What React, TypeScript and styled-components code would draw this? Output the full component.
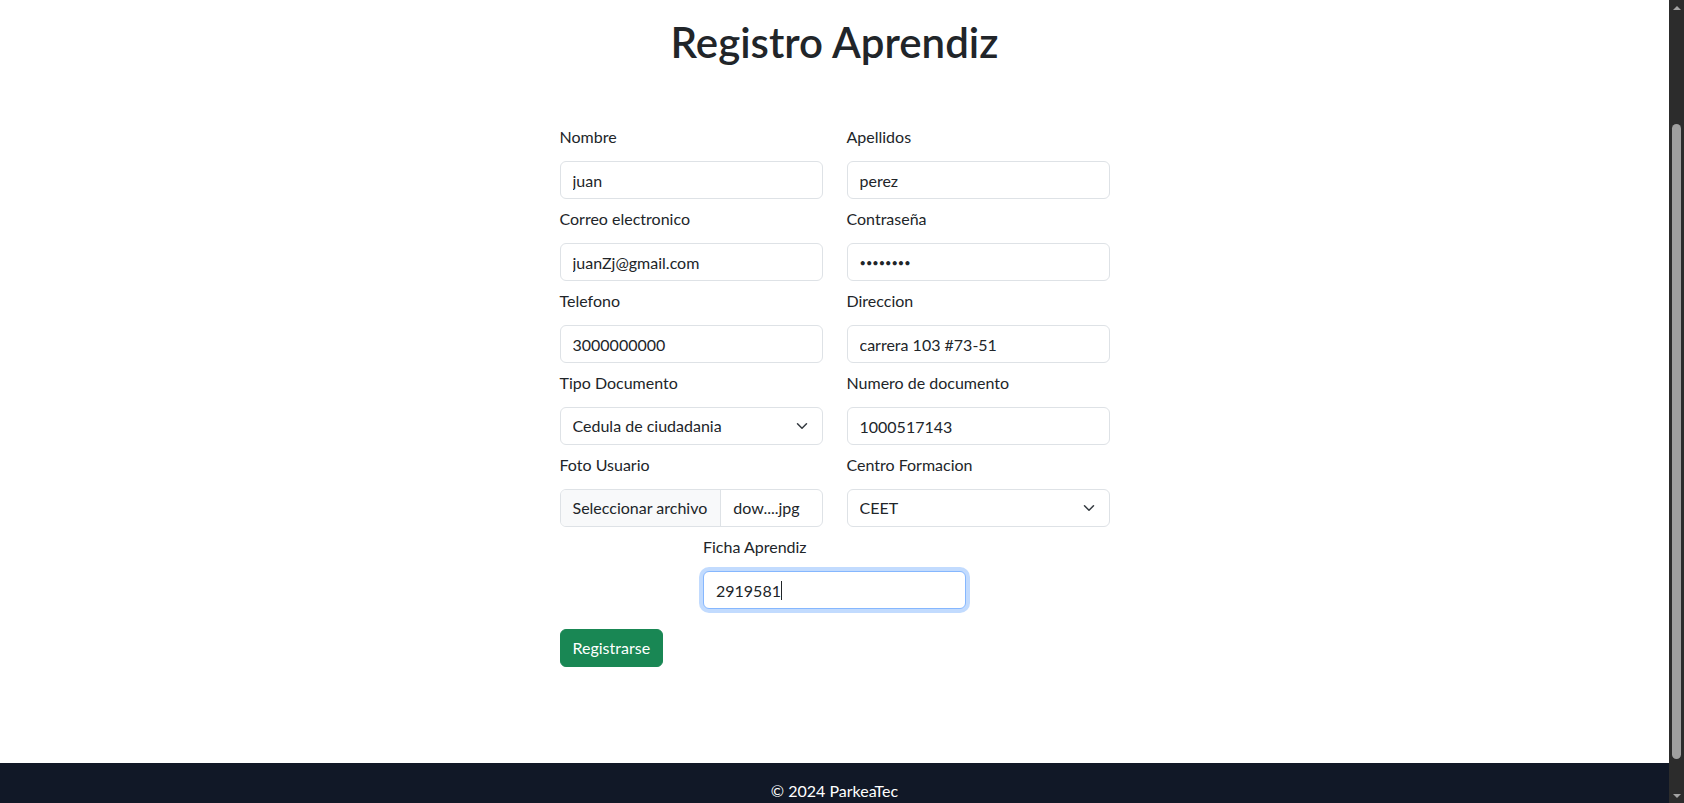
import React from "react";
import styled, { createGlobalStyle, css } from "styled-components";

const GlobalStyle = createGlobalStyle`
  *, *::before, *::after { box-sizing: border-box; }
  html, body { margin: 0; padding: 0; height: 100%; overflow: hidden; }
  body {
    font-family: Lato, "Open Sans", sans-serif;
    font-size: 16px;
    line-height: 1.5;
    color: #212529;
    background: #fff;
  }
`;

const Screen = styled.div`
  display: flex;
  height: 100vh;
  overflow: hidden;
`;

const Page = styled.div`
  flex: 1;
  min-width: 0;
  display: flex;
  flex-direction: column;
  overflow: hidden;
`;

const Main = styled.main`
  display: flex;
  flex-direction: column;
  align-items: center;
  padding: 17px 0 96px;
  flex-shrink: 0;
`;

const Title = styled.h1`
  margin: 0 0 58px;
  font-size: 42px;
  line-height: 1.2;
  font-weight: 600;
  color: #212529;
`;

const Form = styled.form`
  width: 550px;
  display: grid;
  grid-template-columns: 263px 263px;
  column-gap: 24px;
`;

const Group = styled.div<{ $center?: boolean }>`
  display: flex;
  flex-direction: column;
  margin-bottom: 8px;
  ${(p) =>
    p.$center &&
    css`
      grid-column: 1 / -1;
      width: 263px;
      justify-self: center;
    `}
`;

const Label = styled.label`
  display: block;
  line-height: 24px;
  margin-bottom: 12px;
`;

const fieldBase = css`
  display: block;
  width: 100%;
  height: 38px;
  padding: 6px 12px;
  font-family: inherit;
  font-size: 16px;
  line-height: 1.5;
  color: #212529;
  background: #fff;
  border: 1px solid #dee2e6;
  border-radius: 6px;
  outline: none;
`;

const Control = styled.input<{ $focused?: boolean; $masked?: boolean }>`
  ${fieldBase}
  ${(p) =>
    p.$masked &&
    css`
      font-size: 11px;
      line-height: 24px;
    `}
  ${(p) =>
    p.$focused &&
    css`
      border-color: #86b7fe;
      box-shadow: 0 0 0 4px rgba(13, 110, 253, 0.25);
    `}
`;

const FieldWrap = styled.div`
  position: relative;
`;

const CaretLayer = styled.div`
  position: absolute;
  left: 13px;
  top: 1px;
  height: 36px;
  display: flex;
  align-items: center;
  pointer-events: none;
  font-size: 16px;
  line-height: 24px;
`;

const GhostText = styled.span`
  visibility: hidden;
  white-space: pre;
`;

const Caret = styled.span`
  width: 1px;
  height: 19px;
  background: #212529;
`;

const Select = styled.select`
  ${fieldBase}
  appearance: none;
  -webkit-appearance: none;
  padding-right: 36px;
`;

const Chevron = styled.svg`
  position: absolute;
  right: 13px;
  top: 50%;
  transform: translateY(-50%);
  pointer-events: none;
`;

const FileField = styled.div`
  display: flex;
  height: 38px;
  border: 1px solid #dee2e6;
  border-radius: 6px;
  overflow: hidden;
  background: #fff;
`;

const FileButton = styled.span`
  padding: 6px 13px 6px 12px;
  background: #f8f9fa;
  border-right: 1px solid #dee2e6;
  white-space: nowrap;
  line-height: 24px;
`;

const FileName = styled.span`
  padding: 6px 12px;
  white-space: nowrap;
  line-height: 24px;
`;

const SubmitButton = styled.button`
  grid-column: 1;
  justify-self: start;
  margin-top: 12px;
  height: 38px;
  padding: 6px 12px;
  font-family: inherit;
  font-size: 16px;
  line-height: 1.5;
  color: #fff;
  background: #198754;
  border: 1px solid #198754;
  border-radius: 6px;
  cursor: pointer;
`;

const Footer = styled.footer`
  flex-shrink: 0;
  background: #111827;
  color: #fff;
  text-align: center;
  padding: 16px;
  line-height: 24px;
`;

const Scrollbar = styled.div`
  width: 15px;
  flex-shrink: 0;
  height: 100vh;
  background: #2c2c2c;
  display: flex;
  flex-direction: column;
`;

const ScrollArrow = styled.div<{ $down?: boolean }>`
  height: 15px;
  flex-shrink: 0;
  display: flex;
  align-items: center;
  justify-content: center;
  &::before {
    content: "";
    width: 0;
    height: 0;
    border-left: 4px solid transparent;
    border-right: 4px solid transparent;
    ${(p) =>
      p.$down
        ? css`border-top: 4px solid #a3a3a3;`
        : css`border-bottom: 4px solid #a3a3a3;`}
  }
`;

const ScrollTrack = styled.div`
  flex: 1;
  display: flex;
  flex-direction: column;
`;

const ScrollThumb = styled.div<{ $offset: number; $size: number }>`
  margin: ${(p) => p.$offset}px 3px 0;
  height: ${(p) => p.$size}px;
  background: #9f9f9f;
  border-radius: 5px;
`;

const ChevronIcon = () => (
  <Chevron width="16" height="12" viewBox="0 0 16 16" aria-hidden="true">
    <path
      d="m2 5 6 6 6-6"
      fill="none"
      stroke="#343a40"
      strokeWidth="2"
      strokeLinecap="round"
      strokeLinejoin="round"
    />
  </Chevron>
);

const FICHA = "2919581";

export default function App() {
  return (
    <>
      <GlobalStyle />
      <Screen>
        <Page>
          <Main>
            <Title>Registro Aprendiz</Title>
            <Form onSubmit={(e) => e.preventDefault()}>
              <Group>
                <Label htmlFor="nombre">Nombre</Label>
                <Control id="nombre" defaultValue="juan" />
              </Group>
              <Group>
                <Label htmlFor="apellidos">Apellidos</Label>
                <Control id="apellidos" defaultValue="perez" />
              </Group>
              <Group>
                <Label htmlFor="correo">Correo electronico</Label>
                <Control id="correo" type="email" defaultValue="juanZj@gmail.com" />
              </Group>
              <Group>
                <Label htmlFor="pass">Contraseña</Label>
                <Control id="pass" type="password" $masked defaultValue="12345678" />
              </Group>
              <Group>
                <Label htmlFor="tel">Telefono</Label>
                <Control id="tel" defaultValue="3000000000" />
              </Group>
              <Group>
                <Label htmlFor="dir">Direccion</Label>
                <Control id="dir" defaultValue="carrera 103 #73-51" />
              </Group>
              <Group>
                <Label htmlFor="tipo">Tipo Documento</Label>
                <FieldWrap>
                  <Select id="tipo" defaultValue="cc">
                    <option value="cc">Cedula de ciudadania</option>
                    <option value="ti">Tarjeta de identidad</option>
                  </Select>
                  <ChevronIcon />
                </FieldWrap>
              </Group>
              <Group>
                <Label htmlFor="num">Numero de documento</Label>
                <Control id="num" defaultValue="1000517143" />
              </Group>
              <Group>
                <Label>Foto Usuario</Label>
                <FileField>
                  <FileButton>Seleccionar archivo</FileButton>
                  <FileName>dow....jpg</FileName>
                </FileField>
              </Group>
              <Group>
                <Label htmlFor="centro">Centro Formacion</Label>
                <FieldWrap>
                  <Select id="centro" defaultValue="ceet">
                    <option value="ceet">CEET</option>
                  </Select>
                  <ChevronIcon />
                </FieldWrap>
              </Group>
              <Group $center>
                <Label htmlFor="ficha">Ficha Aprendiz</Label>
                <FieldWrap>
                  <Control id="ficha" $focused defaultValue={FICHA} />
                  <CaretLayer aria-hidden="true">
                    <GhostText>{FICHA}</GhostText>
                    <Caret />
                  </CaretLayer>
                </FieldWrap>
              </Group>
              <SubmitButton type="submit">Registrarse</SubmitButton>
            </Form>
          </Main>
          <Footer>© 2024 ParkeaTec</Footer>
        </Page>
        <Scrollbar>
          <ScrollArrow />
          <ScrollTrack>
            <ScrollThumb $offset={109} $size={635} />
          </ScrollTrack>
          <ScrollArrow $down />
        </Scrollbar>
      </Screen>
    </>
  );
}
